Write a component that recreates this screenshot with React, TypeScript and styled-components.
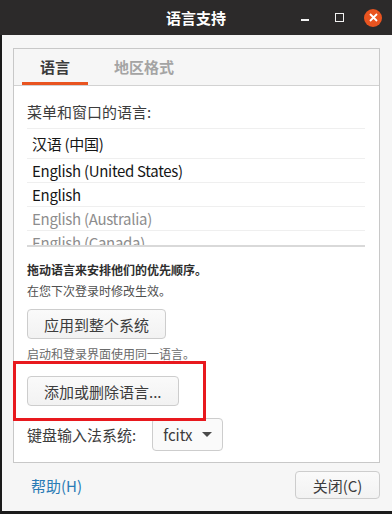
import styled, { createGlobalStyle } from "styled-components";

const GlobalStyle = createGlobalStyle`
  html, body {
    margin: 0;
    padding: 0;
    background: #3a2f2a;
  }
  * {
    box-sizing: border-box;
  }
`;

const Window = styled.div`
  position: relative;
  width: 392px;
  height: 514px;
  display: flex;
  flex-direction: column;
  font-family: "Noto Sans CJK SC", "Noto Sans", sans-serif;
  background: #1b1b1b;
`;

const TitleBar = styled.div`
  height: 35px;
  flex: none;
  display: grid;
  grid-template-columns: 1fr auto 1fr;
  align-items: center;
  background: #2c2a2a;
`;

const Title = styled.div`
  grid-column: 2;
  color: #ffffff;
  font-size: 15px;
  font-weight: 700;
`;

const Controls = styled.div`
  grid-column: 3;
  justify-self: end;
  display: flex;
  gap: 16px;
  padding-right: 10px;
`;

const Control = styled.div`
  width: 18px;
  height: 18px;
  display: flex;
  align-items: center;
  justify-content: center;
`;

const MinIcon = styled.div`
  width: 8px;
  height: 2px;
  margin-top: 4px;
  background: #f2f2f2;
`;

const MaxIcon = styled.div`
  width: 9px;
  height: 9px;
  border: 1.5px solid #f2f2f2;
`;

const CloseIcon = styled.div`
  width: 18px;
  height: 18px;
  border-radius: 50%;
  background: #e95420;
  display: flex;
  align-items: center;
  justify-content: center;
`;

const Body = styled.div`
  flex: 1;
  display: flex;
  flex-direction: column;
  background: #f6f6f6;
  margin-left: 2px;
  margin-bottom: 3px;
  padding: 13px 12px 12px 11px;
`;

const Frame = styled.div`
  flex: 1;
  display: flex;
  flex-direction: column;
  border: 1px solid #c8c8c8;
`;

const TabRow = styled.div`
  height: 37px;
  flex: none;
  display: flex;
  gap: 8px;
  padding-left: 8px;
  border-bottom: 1px solid #d2d2d2;
  background: #f6f6f6;
`;

const Tab = styled.div<{ $active?: boolean }>`
  padding: 0 18px;
  display: flex;
  align-items: center;
  font-size: 15px;
  font-weight: 700;
  color: ${(p) => (p.$active ? "#3c3c3c" : "#a4a4a4")};
  border-bottom: 3px solid ${(p) => (p.$active ? "#e95420" : "transparent")};
  padding-top: 2px;
`;

const Content = styled.div`
  flex: 1;
  display: flex;
  flex-direction: column;
  align-items: flex-start;
  background: #ffffff;
  padding: 16px 14px 0 13px;
`;

const Label = styled.div`
  font-size: 15px;
  line-height: 20px;
  color: #3c3c3c;
`;

const List = styled.div`
  align-self: stretch;
  margin-top: 6px;
  height: 119px;
  overflow: hidden;
  border-top: 1px solid #efefef;
  border-bottom: 2px solid #d9d9d9;
`;

const Row = styled.div<{ $dim?: boolean; $tall?: boolean }>`
  height: ${(p) => (p.$tall ? "30px" : "24px")};
  display: flex;
  align-items: center;
  padding-left: 5px;
  font-size: 15px;
  letter-spacing: -0.3px;
  color: ${(p) => (p.$dim ? "#8d8d8d" : "#161616")};
  border-bottom: 1px solid #efefef;
`;

const Notes = styled.div`
  margin-top: 12px;
  font-size: 12px;
  line-height: 21px;
  color: #505050;
`;

const Strong = styled.div`
  font-weight: 700;
  color: #2e2e2e;
`;

const Note = styled.div`
  margin-top: 4px;
  font-size: 12px;
  line-height: 21px;
  color: #6a6a6a;
`;

const Button = styled.button<{ $top?: number }>`
  margin-top: ${(p) => p.$top ?? 0}px;
  height: 30px;
  padding: 0 16px;
  font-family: inherit;
  font-size: 15px;
  color: #3c3c3c;
  background: linear-gradient(#fafafa, #f2f2f2);
  border: 1px solid #cdcdcd;
  border-radius: 4px;
`;

const KeyboardRow = styled.div`
  margin-top: 12px;
  display: flex;
  align-items: center;
  gap: 16px;
`;

const Combo = styled.div`
  height: 33px;
  width: 71px;
  display: flex;
  align-items: center;
  justify-content: space-between;
  padding: 0 10px 0 10px;
  font-size: 15px;
  color: #3c3c3c;
  background: #fafafa;
  border: 1px solid #cdcdcd;
  border-radius: 4px;
`;

const Caret = styled.div`
  width: 0;
  height: 0;
  border-left: 5px solid transparent;
  border-right: 5px solid transparent;
  border-top: 5px solid #4a4a4a;
`;

const Footer = styled.div`
  margin-top: 8px;
  display: flex;
  align-items: center;
  justify-content: space-between;
`;

const LinkButton = styled.div`
  padding-left: 18px;
  font-size: 15px;
  color: #2a7bb5;
`;

const CloseButton = styled(Button)`
  height: 28px;
  width: 85px;
  padding: 0;
`;

const Annotation = styled.div`
  position: absolute;
  left: 13px;
  top: 361px;
  width: 193px;
  height: 60px;
  border: 3px solid #e8191e;
`;

const languages: { name: string; dim?: boolean }[] = [
  { name: "汉语 (中国)" },
  { name: "English (United States)" },
  { name: "English" },
  { name: "English (Australia)", dim: true },
  { name: "English (Canada)", dim: true },
];

export default function App() {
  return (
    <Window>
      <GlobalStyle />
      <TitleBar>
        <Title>语言支持</Title>
        <Controls>
          <Control>
            <MinIcon />
          </Control>
          <Control>
            <MaxIcon />
          </Control>
          <Control>
            <CloseIcon>
              <svg width="9" height="9" viewBox="0 0 9 9">
                <path d="M1 1L8 8M8 1L1 8" stroke="#fff" strokeWidth="1.8" />
              </svg>
            </CloseIcon>
          </Control>
        </Controls>
      </TitleBar>
      <Body>
        <Frame>
          <TabRow>
            <Tab $active>语言</Tab>
            <Tab>地区格式</Tab>
          </TabRow>
          <Content>
            <Label>菜单和窗口的语言:</Label>
            <List>
              {languages.map((l, i) => (
                <Row key={l.name} $dim={l.dim} $tall={i === 0}>
                  {l.name}
                </Row>
              ))}
            </List>
            <Notes>
              <Strong>拖动语言来安排他们的优先顺序。</Strong>
              <div>在您下次登录时修改生效。</div>
            </Notes>
            <Button $top={8}>应用到整个系统</Button>
            <Note>启动和登录界面使用同一语言。</Note>
            <Button $top={12}>添加或删除语言...</Button>
            <KeyboardRow>
              <Label>键盘输入法系统:</Label>
              <Combo>
                fcitx
                <Caret />
              </Combo>
            </KeyboardRow>
          </Content>
        </Frame>
        <Footer>
          <LinkButton>帮助(H)</LinkButton>
          <CloseButton>关闭(C)</CloseButton>
        </Footer>
      </Body>
      <Annotation />
    </Window>
  );
}
